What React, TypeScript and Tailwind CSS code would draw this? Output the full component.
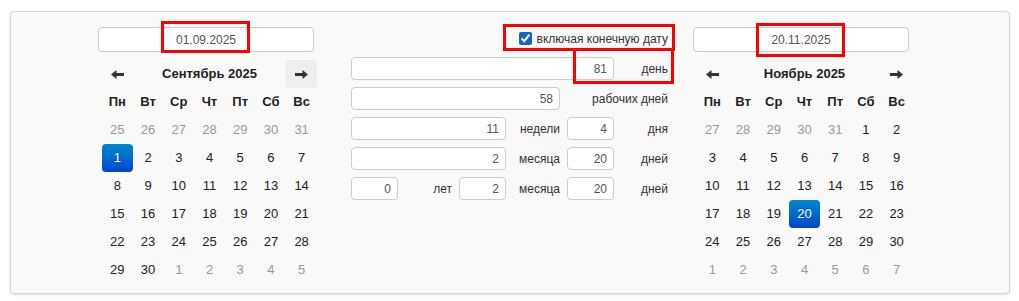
import React from "react";

type Day = { d: number; muted: boolean };

const DOW = ["Пн", "Вт", "Ср", "Чт", "Пт", "Сб", "Вс"];

// Сетка 6x7: хвост прошлого месяца, сам месяц, начало следующего.
function buildDays(prevLast: number, lead: number, total: number): Day[] {
  const out: Day[] = [];
  for (let i = lead; i > 0; i--) out.push({ d: prevLast - i + 1, muted: true });
  for (let d = 1; d <= total; d++) out.push({ d, muted: false });
  let n = 1;
  while (out.length < 42) out.push({ d: n++, muted: true });
  return out;
}

function Arrow({ dir }: { dir: "left" | "right" }) {
  return (
    <svg width="13" height="9" viewBox="0 0 13 9" className={dir === "right" ? "rotate-180" : ""}>
      <polygon points="0,4.5 5.5,0 5.5,9" fill="#333" />
      <rect x="5" y="3" width="8" height="3" fill="#333" />
    </svg>
  );
}

function Calendar({
  value,
  title,
  days,
  selected,
  hoverNext,
}: {
  value: string;
  title: string;
  days: Day[];
  selected: number;
  hoverNext?: boolean;
}) {
  return (
    <div className="w-[219px]">
      <div className="flex h-[25px] w-[216px] items-center justify-center rounded border border-[#ccc] bg-white text-[12px] text-[#555]">
        {value}
      </div>
      <div className="mt-[8px] pl-[4px]">
        <div className="grid w-[215px] grid-cols-7 text-[13px] text-[#222]">
          <div className="flex h-[28px] items-center justify-center">
            <Arrow dir="left" />
          </div>
          <div className="col-span-5 flex h-[28px] items-center justify-center font-bold">{title}</div>
          <div
            className={`flex h-[28px] items-center justify-center rounded ${hoverNext ? "bg-[#eee]" : ""}`}
          >
            <Arrow dir="right" />
          </div>
          {DOW.map((d) => (
            <div key={d} className="flex h-[28px] items-center justify-center font-bold">
              {d}
            </div>
          ))}
          {days.map((x, i) => {
            const sel = !x.muted && x.d === selected;
            return (
              <div
                key={i}
                className={`flex h-[28px] items-center justify-center ${
                  sel
                    ? "rounded bg-gradient-to-b from-[#08c] to-[#04c] text-white [text-shadow:0_-1px_0_rgba(0,0,0,0.25)]"
                    : x.muted
                      ? "text-[#999]"
                      : ""
                }`}
              >
                {x.d}
              </div>
            );
          })}
        </div>
      </div>
    </div>
  );
}

function Field({ value, span }: { value: string; span: string }) {
  return (
    <div
      className={`${span} flex h-[23px] items-center justify-end rounded border border-[#ccc] bg-white px-[6px] text-[12px] text-[#555]`}
    >
      {value}
    </div>
  );
}

function Label({ text, span }: { text: string; span: string }) {
  return <div className={`${span} flex h-[23px] items-center justify-end text-[12px] text-[#333]`}>{text}</div>;
}

export default function App() {
  const sept = buildDays(31, 7, 30).slice(0, 42);
  const nov = buildDays(31, 5, 30);

  return (
    <div className="relative h-[301px] w-[1019px] bg-white pt-[11px] pl-[10px] font-['Liberation_Sans',Arial,sans-serif]">
      <div className="h-[283px] w-[1000px] rounded border border-[#d6d6d6] bg-[#f9f9f9] pt-[15px] pl-[87px] shadow-[0_1px_3px_rgba(0,0,0,0.12)]">
        <div className="flex items-start">
          <Calendar value="01.09.2025" title="Сентябрь 2025" days={sept} selected={1} hoverNext />

          <div className="ml-[34px] w-[317px]">
            <label className="flex h-[23px] items-center justify-end gap-[5px] text-[12px] text-[#333]">
              <input type="checkbox" defaultChecked className="m-0 h-[13px] w-[13px] accent-[#1565c0]" />
              включая конечную дату
            </label>
            <div className="mt-[7px] grid grid-cols-[repeat(6,47px)] gap-x-[7px] gap-y-[7px]">
              <Field value="81" span="col-span-5" />
              <Label text="день" span="col-span-1" />

              <Field value="58" span="col-span-4" />
              <Label text="рабочих дней" span="col-span-2" />

              <Field value="11" span="col-span-3" />
              <Label text="недели" span="col-span-1" />
              <Field value="4" span="col-span-1" />
              <Label text="дня" span="col-span-1" />

              <Field value="2" span="col-span-3" />
              <Label text="месяца" span="col-span-1" />
              <Field value="20" span="col-span-1" />
              <Label text="дней" span="col-span-1" />

              <Field value="0" span="col-span-1" />
              <Label text="лет" span="col-span-1" />
              <Field value="2" span="col-span-1" />
              <Label text="месяца" span="col-span-1" />
              <Field value="20" span="col-span-1" />
              <Label text="дней" span="col-span-1" />
            </div>
          </div>

          <div className="ml-[25px]">
            <Calendar value="20.11.2025" title="Ноябрь 2025" days={nov} selected={20} />
          </div>
        </div>
      </div>

      {/* Красные рамки-пометки поверх скриншота */}
      <div className="pointer-events-none absolute top-[21px] left-[161px] h-[32px] w-[89px] border-[3px] border-[#f00]" />
      <div className="pointer-events-none absolute top-[23px] left-[756px] h-[34px] w-[89px] border-[3px] border-[#f00]" />
      <div className="pointer-events-none absolute top-[24px] left-[503px] h-[27px] w-[172px] border-[3px] border-[#f00]" />
      <div className="pointer-events-none absolute top-[48px] left-[573px] h-[36px] w-[101px] border-[3px] border-[#f00]" />
    </div>
  );
}
